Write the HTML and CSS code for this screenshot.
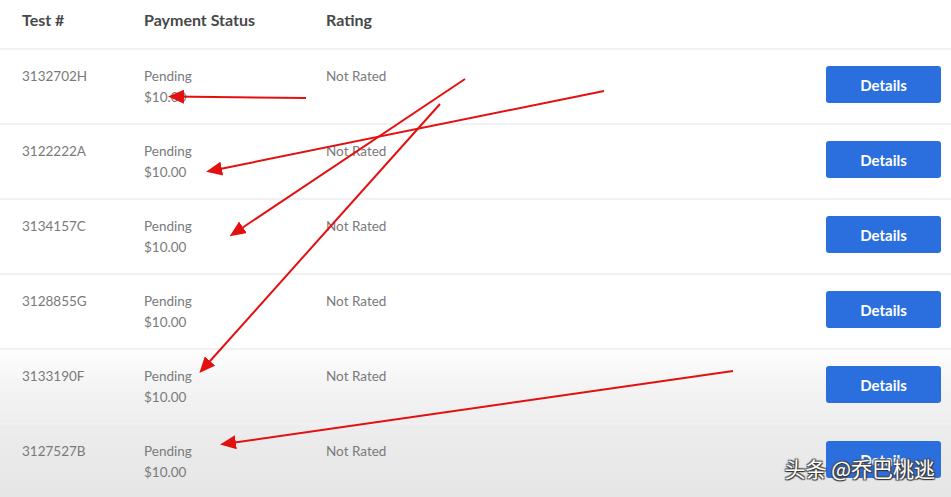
FILE: index.html
```html
<!DOCTYPE html>
<html lang="en">
<head>
    <meta charset="UTF-8">
    <meta name="viewport" content="width=device-width, initial-scale=1.0">
    <title>Tests</title>
    <link rel="stylesheet" href="styles.css">
</head>
<body>
    <div class="tests">
        <div class="row header">
            <div class="col-id">Test #</div>
            <div class="col-status">Payment Status</div>
            <div class="col-rating">Rating</div>
        </div>
        <div class="row">
            <div class="col-id">3132702H</div>
            <div class="col-status">Pending<br>$10.00</div>
            <div class="col-rating">Not Rated</div>
            <button class="details">Details</button>
        </div>
        <div class="row">
            <div class="col-id">3122222A</div>
            <div class="col-status">Pending<br>$10.00</div>
            <div class="col-rating">Not Rated</div>
            <button class="details">Details</button>
        </div>
        <div class="row">
            <div class="col-id">3134157C</div>
            <div class="col-status">Pending<br>$10.00</div>
            <div class="col-rating">Not Rated</div>
            <button class="details">Details</button>
        </div>
        <div class="row">
            <div class="col-id">3128855G</div>
            <div class="col-status">Pending<br>$10.00</div>
            <div class="col-rating">Not Rated</div>
            <button class="details">Details</button>
        </div>
        <div class="row">
            <div class="col-id">3133190F</div>
            <div class="col-status">Pending<br>$10.00</div>
            <div class="col-rating">Not Rated</div>
            <button class="details">Details</button>
        </div>
        <div class="row">
            <div class="col-id">3127527B</div>
            <div class="col-status">Pending<br>$10.00</div>
            <div class="col-rating">Not Rated</div>
            <button class="details">Details</button>
        </div>
    </div>

    <!-- annotation arrows drawn over the table -->
    <svg class="arrows" width="951" height="497" viewBox="0 0 951 497">
        <defs>
            <marker id="head" markerWidth="8" markerHeight="7" refX="6" refY="3.5" orient="auto" markerUnits="strokeWidth">
                <polygon points="0 0, 8 3.5, 0 7" fill="#e31010"/>
            </marker>
        </defs>
        <line x1="306" y1="98" x2="172" y2="96.5" marker-end="url(#head)"/>
        <line x1="604" y1="91" x2="210" y2="171" marker-end="url(#head)"/>
        <line x1="465" y1="79" x2="233" y2="234" marker-end="url(#head)"/>
        <line x1="440" y1="104" x2="202" y2="370" marker-end="url(#head)"/>
        <line x1="733" y1="371" x2="224" y2="444" marker-end="url(#head)"/>
    </svg>

    <div class="watermark">头条 @乔巴桃逃</div>
</body>
</html>
```

FILE: styles.css
```css
body {
    margin: 0;
    font-family: Lato, "Open Sans", Arial, sans-serif;
    background: linear-gradient(#fff 0, #fff 345px, #f4f4f4 385px, #ebebeb 440px, #e6e6e6 497px);
    height: 497px;
    overflow: hidden;
    position: relative;
}

.tests {
    width: 100%;
}

.row {
    display: flex;
    align-items: flex-start;
    height: 57px;
    border-top: 2px solid #f1f1f1;
    padding: 16px 10px 0 22px;
    font-size: 13.5px;
    line-height: 21px;
    color: #7a7a7a;
}

.row.header {
    height: 38px;
    border-top: none;
    padding-top: 10px;
    font-weight: bold;
    color: #474747;
    font-size: 16px;
    line-height: 20px;
}

.col-id {
    width: 122px;
}

.col-status {
    width: 182px;
}

.col-rating {
    flex: 1;
}

.details {
    width: 115px;
    height: 37px;
    background-color: #2b6fdf;
    color: #fff;
    border: none;
    border-radius: 3px;
    font-family: inherit;
    font-weight: bold;
    font-size: 15px;
    cursor: pointer;
}

.arrows {
    position: absolute;
    top: 0;
    left: 0;
    pointer-events: none;
}

.arrows line {
    stroke: #e31010;
    stroke-width: 2;
}

.watermark {
    position: absolute;
    right: 16px;
    bottom: 14px;
    font-family: "Noto Sans CJK SC", sans-serif;
    font-size: 21px;
    color: #fff;
    text-shadow: 1px 1px 1px #333, -1px -1px 1px #555, 1px -1px 1px #444, -1px 1px 1px #444;
}
```
